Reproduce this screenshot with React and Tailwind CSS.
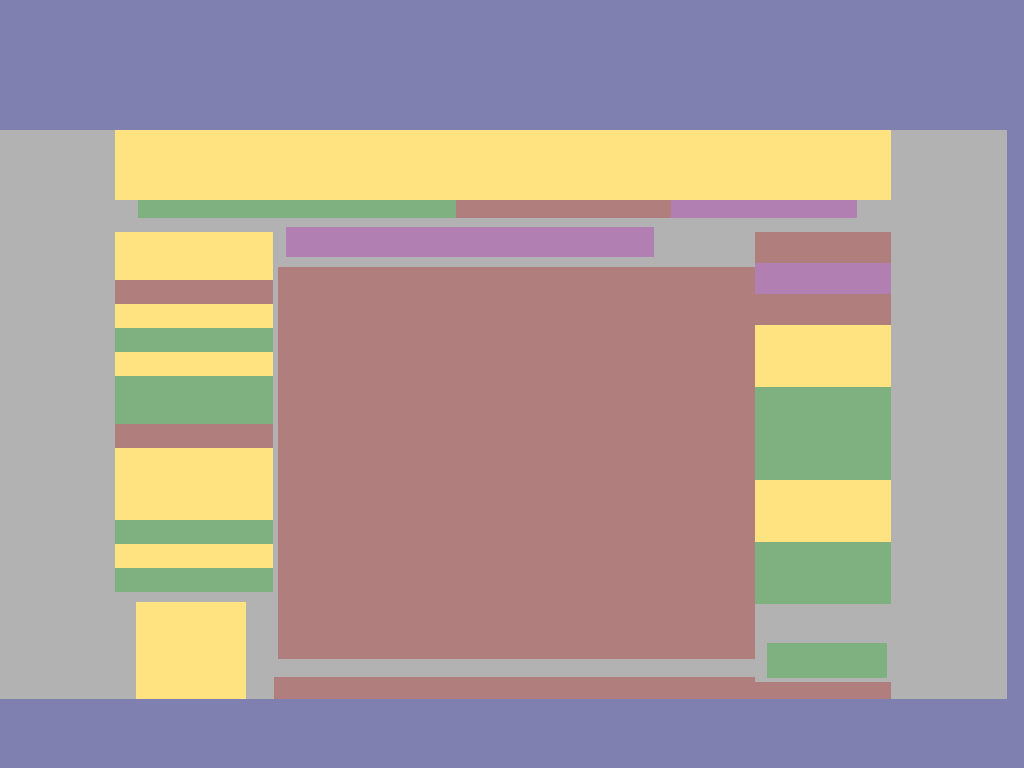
export default function App() {
  const leftRows = [
    ['bg-[#ffe380]', 'h-[48px]'],
    ['bg-[#b07f7d]', 'h-[24px]'],
    ['bg-[#ffe380]', 'h-[24px]'],
    ['bg-[#7fb07f]', 'h-[24px]'],
    ['bg-[#ffe380]', 'h-[24px]'],
    ['bg-[#7fb07f]', 'h-[48px]'],
    ['bg-[#b07f7d]', 'h-[24px]'],
    ['bg-[#ffe380]', 'h-[72px]'],
    ['bg-[#7fb07f]', 'h-[24px]'],
    ['bg-[#ffe380]', 'h-[24px]'],
    ['bg-[#7fb07f]', 'h-[24px]'],
  ];

  const rightRows = [
    ['bg-[#b07f7d]', 'h-[31px]'],
    ['bg-[#b27fb2]', 'h-[31px]'],
    ['bg-[#b07f7d]', 'h-[31px]'],
    ['bg-[#ffe380]', 'h-[62px]'],
    ['bg-[#7fb07f]', 'h-[93px]'],
    ['bg-[#ffe380]', 'h-[62px]'],
    ['bg-[#7fb07f]', 'h-[62px]'],
  ];

  return (
    <div className="w-[1024px] h-[768px] bg-[#7f7fb0] pt-[130px] overflow-hidden">
      <div className="w-[1007px] h-[569px] bg-[#b2b2b2] overflow-hidden">
        <div className="ml-[115px] w-[776px]">
          {/* header */}
          <div className="h-[70px] bg-[#ffe380]" />

          {/* nav */}
          <div className="flex h-[18px] ml-[23px]">
            <div className="w-[318px] bg-[#7fb07f]" />
            <div className="w-[215px] bg-[#b07f7d]" />
            <div className="w-[186px] bg-[#b27fb2]" />
          </div>

          <div className="flex">
            {/* left column */}
            <div className="w-[158px] mt-[14px] flex flex-col">
              {leftRows.map(([bg, h], i) => (
                <div key={i} className={`${bg} ${h}`} />
              ))}
              <div className="mt-[10px] ml-[21px] w-[110px] h-[120px] bg-[#ffe380]" />
            </div>

            {/* center */}
            <div className="w-[482px] mt-[9px] flex flex-col">
              <div className="ml-[13px] w-[368px] h-[30px] bg-[#b27fb2]" />
              <div className="mt-[10px] ml-[5px] w-[477px] h-[392px] bg-[#b07f7d]" />
              <div className="mt-[18px] ml-[1px] w-[481px] h-[40px] bg-[#b07f7d]" />
            </div>

            {/* right column */}
            <div className="w-[136px] mt-[14px] flex flex-col">
              {rightRows.map(([bg, h], i) => (
                <div key={i} className={`${bg} ${h}`} />
              ))}
              <div className="mt-[39px] ml-[12px] w-[120px] h-[35px] bg-[#7fb07f]" />
              <div className="mt-[4px] h-[40px] bg-[#b07f7d]" />
            </div>
          </div>
        </div>
      </div>
    </div>
  );
}
